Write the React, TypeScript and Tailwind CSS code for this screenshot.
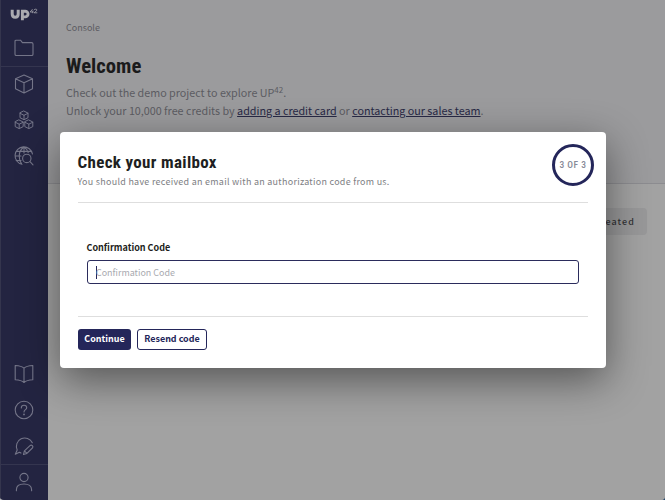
import type { ReactNode } from "react";

const SANS = "font-['Noto_Sans_CJK_SC','Noto_Sans',sans-serif]";
const CONDENSED = "font-['Roboto_Condensed','Roboto',sans-serif]";

function NavItem({ label, children, className = "" }: { label: string; children: ReactNode; className?: string }) {
  return (
    <a aria-label={label} className={`flex h-9 w-full shrink-0 items-start justify-center pt-2 ${className}`}>
      <svg width="20" height="20" viewBox="0 0 20 20" fill="none" stroke="currentColor" strokeWidth="1.1" strokeLinecap="round" strokeLinejoin="round">
        {children}
      </svg>
    </a>
  );
}

function SmallCube({ x, y }: { x: number; y: number }) {
  return (
    <g transform={`translate(${x} ${y})`} strokeWidth="1">
      <path d="M0-4.4 4-2.4V2.2L0 4.2-4 2.2V-2.4ZM-4-2.2 0-.2 4-2.2M0-.2V4" />
    </g>
  );
}

function Sidebar() {
  return (
    <nav className="flex h-full w-12 shrink-0 flex-col bg-[#232441] text-[#747588] shadow-[inset_1px_0_0_#34354d]">
      <div className="flex h-[30px] shrink-0 items-start pl-[10px] pt-[8px] text-[#aaaab0]">
        <svg width="28" height="14" viewBox="0 0 28 14" fill="none" stroke="currentColor">
          <path d="M2.2 1.8V6Q2.2 9.2 5.2 9.2T8.2 6V1.8" strokeWidth="3" />
          <path d="M12.4 12.3V3.2H15.2A2.8 2.8 0 0 1 15.2 8.9H12.4" strokeWidth="2.9" />
          <path d="M22.5 1.2 20.2 4H23.3M22.8 2.6V5.2M24 2.2Q24.3 1.2 25.6 1.2C27.6 1.2 27 2.8 24.2 4.8H27.3" strokeWidth=".8" />
        </svg>
      </div>
      <NavItem label="Projects">
        <path d="M1 16.2V3.4Q1 2.2 2.2 2.2H6.5L8.4 4.6H17.6Q19 4.6 19 6V16.2Q19 17.5 17.7 17.5H2.3Q1 17.5 1 16.2Z" />
      </NavItem>
      <NavItem label="Marketplace" className="border-t border-[#34354f] pt-[7px]">
        <path d="M10 1 18.5 4.8V14.8L10 19 1.5 14.8V4.8ZM1.5 4.8 10 8.8 18.5 4.8M10 8.8V19" />
      </NavItem>
      <NavItem label="Blocks">
        <SmallCube x={10} y={5.5} />
        <SmallCube x={5.2} y={14.4} />
        <SmallCube x={14.8} y={14.4} />
      </NavItem>
      <NavItem label="Catalog">
        <path d="M8 18.3A8.8 8.8 0 1 1 18.5 8M10 1C6.5 3.3 5.2 6.5 5.2 10S6 16 7.7 18M10 1C12.4 2.5 13.7 4.5 14.2 6.7M10 1V7M2.3 5.4H17.5M1.2 10H7M2.2 14.5H7" />
        <circle cx="12.8" cy="12.4" r="4.2" />
        <path d="m16 15.6 3 3.2" />
      </NavItem>
      <div className="grow" />
      <NavItem label="Documentation">
        <path d="M10 4.2C8 2.2 5 1.7 1.2 1.5V15.8C5 16 8 16.6 10 18.5 12 16.6 15 16 18.8 15.8V1.5C15 1.7 12 2.2 10 4.2ZM10 4.2V18.5" />
      </NavItem>
      <NavItem label="Help">
        <circle cx="10" cy="10" r="8.8" />
        <path d="M7.3 7.9C7.3 6.2 8.4 5.2 10 5.2S12.7 6.2 12.7 7.7C12.7 9.7 10 9.6 10 12" />
        <circle cx="10" cy="14.4" r=".4" />
      </NavItem>
      <NavItem label="Feedback">
        <path d="M7 17A8 8 0 0 1 5.3 16.3L1.3 18.3 3.2 14A7.9 7.9 0 1 1 18.3 6.8" />
        <path d="m9.5 18.5.9-3.6L16 9.6Q17.2 8.5 18.3 9.6T18.4 12L12.9 17.4ZM10.4 14.9l2.5 2.5" />
      </NavItem>
      <NavItem label="Account" className="border-t border-[#34354f] pt-[7px]">
        <circle cx="10" cy="5.5" r="4.1" />
        <path d="M2.4 18.7V17.7C2.4 14.2 5.4 12 10 12S17.6 14.2 17.6 17.7V18.7" />
      </NavItem>
    </nav>
  );
}

function Page() {
  return (
    <main className="flex h-full min-w-0 grow flex-col bg-[#a2a2a2]">
      <header className="h-[184px] shrink-0 border-b border-[#8c8c90] bg-[#9b9b9d] px-[18px] pt-5 text-[#5b5c62]">
        <p className="h-4 text-[9px] leading-4">Console</p>
        <h1 className={`mt-[17px] h-[26px] text-[20.7px] font-bold leading-[26px] text-[#1b1b1c] ${CONDENSED} [font-stretch:75%]`}>Welcome</h1>
        <p className="mt-[5px] h-[18px] whitespace-nowrap text-[10.75px] leading-[18px]">
          Check out the demo project to explore UP<sup className="-top-[4px] text-[8px]">42</sup>.
        </p>
        <p className="h-[18px] whitespace-nowrap text-[10.75px] leading-[18px]">
          Unlock your 10,000 free credits by{" "}
          <a className="text-[#282945] underline">adding a credit card</a> or{" "}
          <a className="text-[#282945] underline">contacting our sales team</a>.
        </p>
      </header>
      <div className="flex justify-end pr-[18px] pt-6">
        <div className="flex h-[27px] w-[110px] items-center justify-end rounded bg-[#989899] pr-[12px] pt-px text-[8.95px] font-medium tracking-[1.1px] text-[#333335]">
          Created
        </div>
      </div>
    </main>
  );
}

function Dialog() {
  return (
    <section role="dialog" className="absolute left-[60px] top-[132px] flex h-[236px] w-[546px] flex-col rounded-[4px] bg-white px-[18px] shadow-[0_12px_42px_rgba(0,0,0,0.48)]">
      <header className="flex h-[71px] shrink-0 justify-between border-b border-[#dedede]">
        <div className="-ml-[0.5px] pt-[18px]">
          <h2 className={`h-6 whitespace-nowrap text-[17px] font-bold leading-6 tracking-[0.33px] text-[#1e1f22] ${CONDENSED} [font-stretch:75%]`}>Check your mailbox</h2>
          <p className="whitespace-nowrap text-[8.95px] leading-4 tracking-[0.29px] text-[#7d7e83]">
            You should have received an email with an authorization code from us.
          </p>
        </div>
        <div className={`-mr-[6px] mt-3 flex size-[42px] items-center justify-center whitespace-nowrap rounded-full border-[3px] border-[#24265a] text-[9.5px] font-medium tracking-[0.5px] text-[#888b98] ${CONDENSED} [font-stretch:75%]`}>
          3 OF 3
        </div>
      </header>
      <div className="flex h-[114px] shrink-0 flex-col border-b border-[#dedede] px-[9px] pt-[37px]">
        <label className="-ml-[0.5px] h-4 text-[9px] font-bold leading-4 text-[#1d1e20]">Confirmation Code</label>
        <div className="mt-1 flex h-6 items-center rounded-[3px] border border-[#2b2c5c] pl-2">
          <span className="h-[13px] w-px bg-[#24265a]" />
          <span className="-ml-px pt-[2px] text-[8.95px] leading-4 text-[#a9aab0]">Confirmation Code</span>
        </div>
      </div>
      <footer className="flex gap-[6px] pt-3 text-[8.95px] font-bold">
        <button className="h-[21px] w-[53px] whitespace-nowrap rounded-[3px] bg-[#24265a] pb-[2px] leading-[19px] text-white">Continue</button>
        <button className="h-[21px] w-[70px] whitespace-nowrap rounded-[3px] border border-[#24265a] pb-[2px] leading-[17px] text-[#24265a]">Resend code</button>
      </footer>
    </section>
  );
}

export default function App() {
  return (
    <div className={`h-[500px] w-[665px] bg-linear-to-r from-[#b5b5b8] to-[#24466b] ${SANS}`}>
      <div className="relative flex h-full w-full overflow-hidden rounded-b-[4px] bg-[#a2a2a2]">
        <Sidebar />
        <Page />
        <Dialog />
      </div>
    </div>
  );
}
